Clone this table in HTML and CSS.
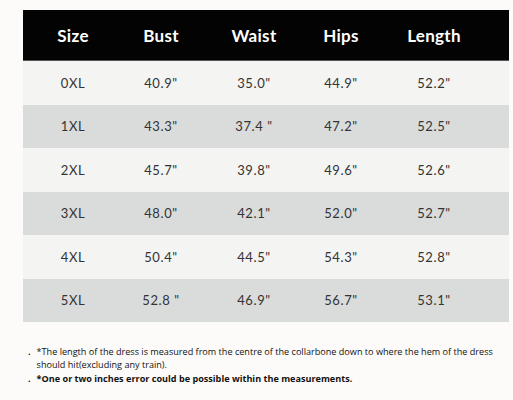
FILE: index.html
```html
<!DOCTYPE html>
<html>
<head>
<meta charset="utf-8">
<link rel="stylesheet" href="styles.css">
</head>
<body>
<div class="page">
  <div class="chart">
    <div class="row head">
      <div>Size</div><div>Bust</div><div>Waist</div><div>Hips</div><div>Length</div>
    </div>
    <div class="row light"><div>0XL</div><div>40.9"</div><div>35.0"</div><div>44.9"</div><div>52.2"</div></div>
    <div class="row dark"><div>1XL</div><div>43.3"</div><div>37.4 "</div><div>47.2"</div><div>52.5"</div></div>
    <div class="row light"><div>2XL</div><div>45.7"</div><div>39.8"</div><div>49.6"</div><div>52.6"</div></div>
    <div class="row dark"><div>3XL</div><div>48.0"</div><div>42.1"</div><div>52.0"</div><div>52.7"</div></div>
    <div class="row light"><div>4XL</div><div>50.4"</div><div>44.5"</div><div>54.3"</div><div>52.8"</div></div>
    <div class="row dark"><div>5XL</div><div>52.8 "</div><div>46.9"</div><div>56.7"</div><div>53.1"</div></div>
  </div>
  <ul class="notes">
    <li><span class="dot">.</span><span>*The length of the dress is measured from the centre of the collarbone down to where the hem of the dress should hit(excluding any train).</span></li>
    <li class="bold"><span class="dot">.</span><span>*One or two inches error could be possible within the measurements.</span></li>
  </ul>
</div>
</body>
</html>
```
FILE: styles.css
```css
html, body {
  margin: 0;
  padding: 0;
  background: #fcfbf9;
}
.page {
  width: 513px;
  height: 400px;
  padding: 10px 4px 0 23px;
  box-sizing: border-box;
}
.chart {
  width: 486px;
  font-family: Lato, "Liberation Sans", sans-serif;
  color: #333;
}
.row {
  display: grid;
  grid-template-columns: 100px 76px 110px 64px 122px;
  padding-right: 14px;
  align-items: center;
  text-align: center;
  height: 43.5px;
  font-size: 13px;
  letter-spacing: 0.6px;
}
.row > div {
  white-space: nowrap;
}
.row.head {
  height: 50px;
  background: #030303;
  border-bottom: 1px solid #555;
  color: #fff;
  font-weight: 700;
  font-size: 17px;
  letter-spacing: 0.3px;
}
.row.light { background: #f4f4f2; }
.row.dark { background: #dadcdb; }
.notes {
  list-style: none;
  margin: 23px 0 0 0;
  padding: 0 0 0 5px;
  font-family: "Open Sans", "Noto Sans", sans-serif;
  font-size: 9.1px;
  line-height: 13px;
  color: #111;
}
.notes li {
  display: flex;
  gap: 6px;
}
.notes .dot {
  font-weight: 700;
  flex: none;
}
.notes li.bold {
  font-weight: 700;
  margin-top: 1px;
}
```
